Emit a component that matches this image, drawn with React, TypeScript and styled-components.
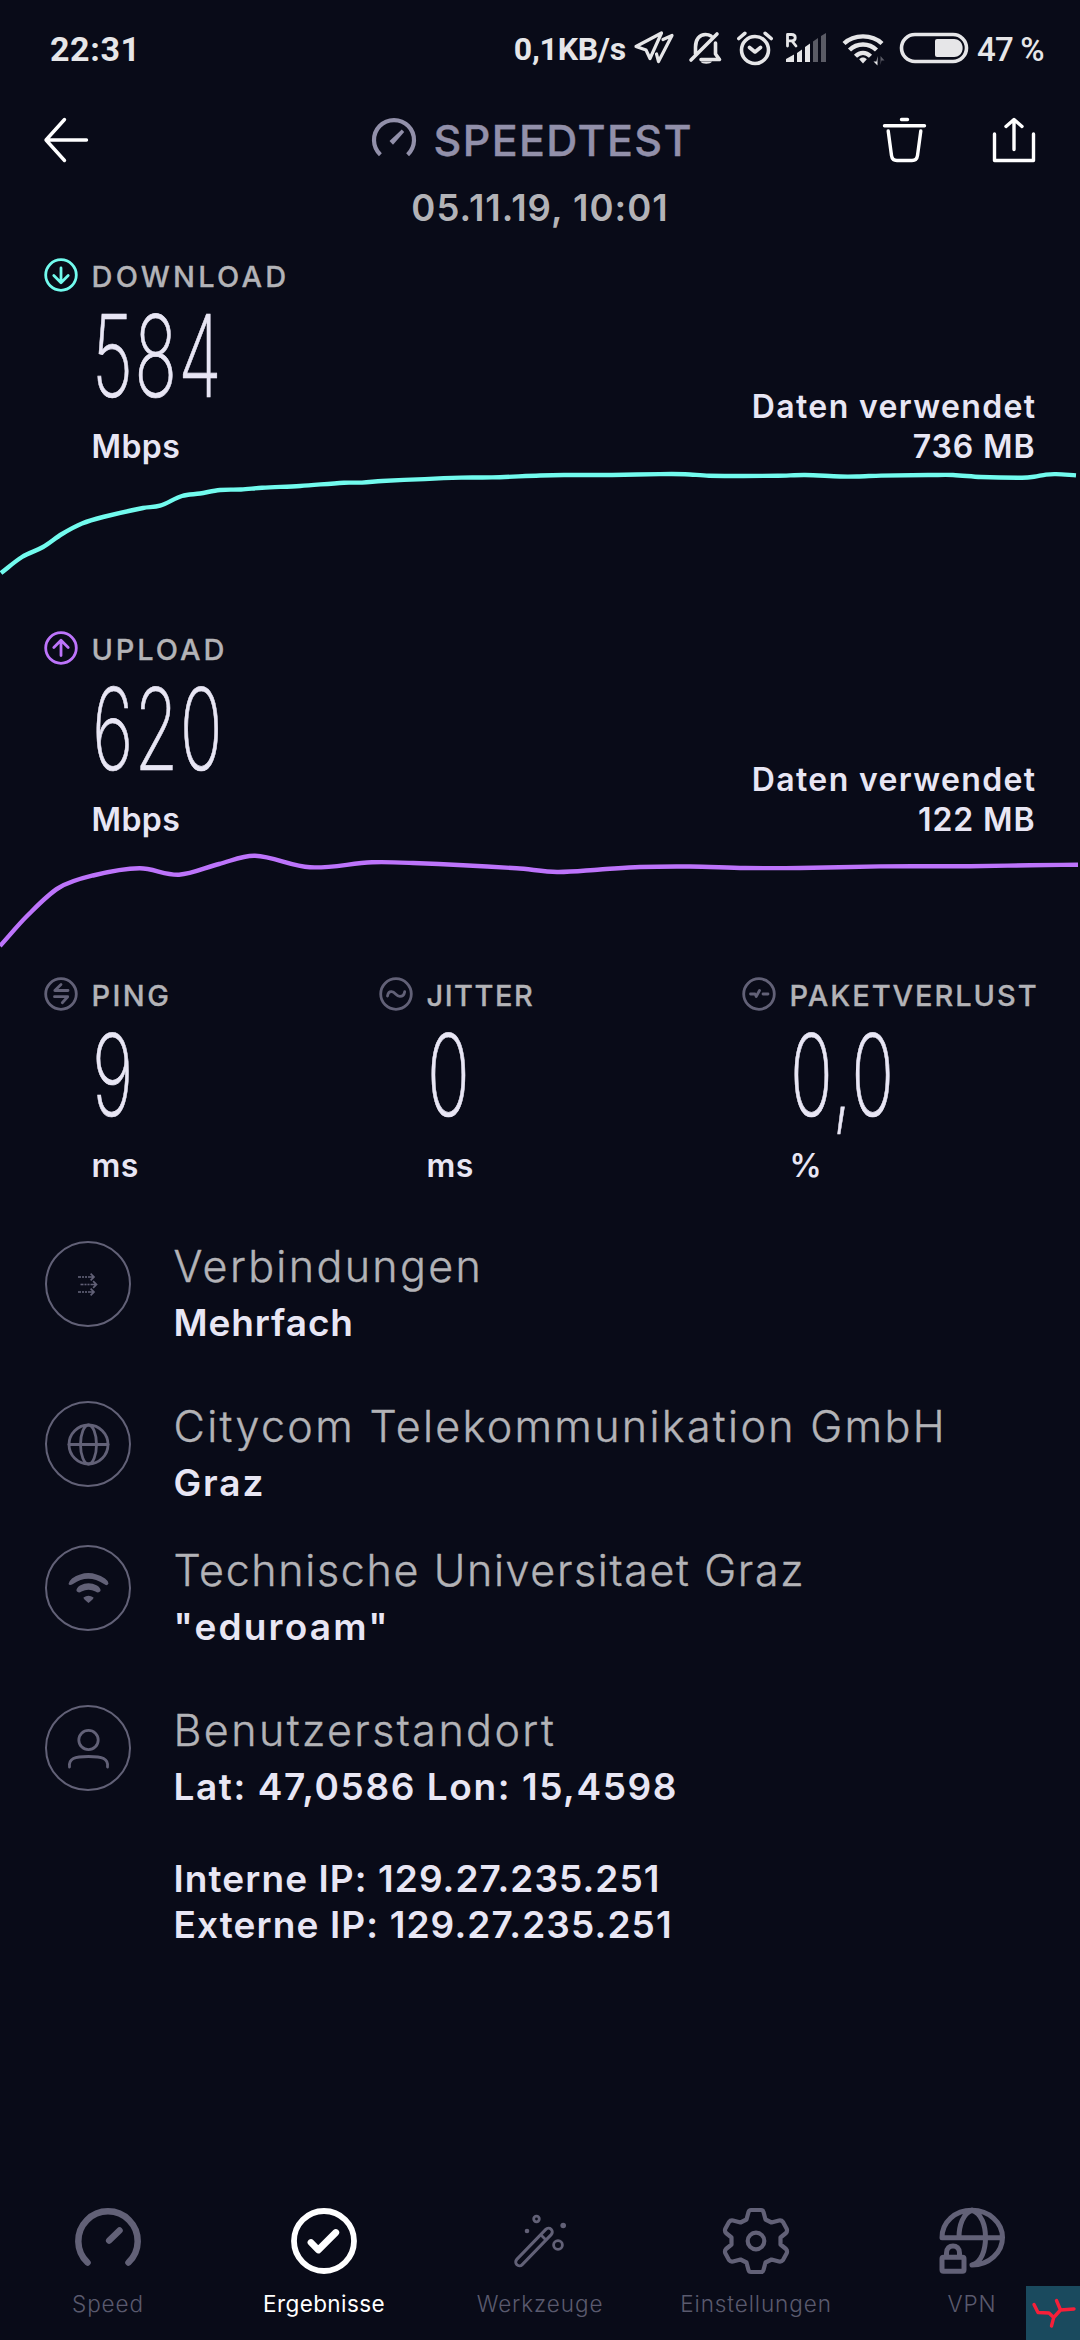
import React from 'react';
import styled, { createGlobalStyle } from 'styled-components';

const color = {
  bg: '#090b18',
  white: '#ffffff',
  text: '#e8e6f4',
  muted: '#b3b3b7',
  brand: '#9290aa',
  icon: '#626177',
  nav: '#5a5a6e',
  status: '#e6e6e8',
  statusDim: '#5a5b65',
  download: '#72fbee',
  upload: '#bd74fb',
};

const GlobalStyle = createGlobalStyle`
  body { margin: 0; background: ${color.bg}; }
  svg { display: block; flex: none; fill: none; overflow: visible; }
`;

const Screen = styled.div`
  position: relative;
  width: 1080px;
  height: 2340px;
  display: flex;
  flex-direction: column;
  background: ${color.bg};
  color: ${color.text};
  font-family: Inter, 'Noto Sans', sans-serif;
  white-space: nowrap;
  overflow: hidden;
`;

const StatusBar = styled.div`
  height: 98px;
  padding: 0 37px 0 50px;
  display: flex;
  align-items: center;
  justify-content: space-between;
  font-family: Roboto, sans-serif;
  color: ${color.status};
`;

const Clock = styled.span`
  font-size: 34px;
  font-weight: 700;
  letter-spacing: 0.6px;
`;

const StatusCluster = styled.div`
  display: flex;
  align-items: center;
`;

const NetSpeed = styled.span`
  font-size: 32px;
  font-weight: 700;
  letter-spacing: -0.2px;
`;

const StatusIcon = styled.svg<{ $gap: number; $stroke?: number }>`
  height: 42px;
  margin-left: ${(p) => p.$gap}px;
  stroke: ${color.status};
  stroke-width: ${(p) => p.$stroke ?? 3.6};
  stroke-linecap: round;
  stroke-linejoin: round;
`;

const BatteryText = styled.span`
  width: 66px;
  margin-left: 8px;
  font-size: 33px;
  font-weight: 500;
  letter-spacing: -0.8px;
`;

const Header = styled.header`
  height: 84px;
  padding: 0 44.5px 0 44px;
  display: grid;
  grid-template-columns: 328px 1fr auto;
  align-items: center;
`;

const Brand = styled.div`
  display: flex;
  align-items: center;
  gap: 17.5px;
  font-size: 43px;
  font-weight: 500;
  -webkit-text-stroke: 0.4px ${color.brand};
  letter-spacing: 1.4px;
  line-height: 52px;
  color: ${color.brand};
`;

const Actions = styled.div`
  display: flex;
  gap: 65px;
`;

const LineIcon = styled.svg`
  width: 44px;
  height: 44px;
  stroke: ${color.white};
  stroke-width: 3.4;
  stroke-linecap: round;
  stroke-linejoin: round;
`;

const DateLine = styled.div`
  height: 51px;
  line-height: 52px;
  text-align: center;
  font-size: 36.5px;
  font-weight: 600;
  letter-spacing: 1px;
  color: ${color.muted};
`;

const Transfer = styled.section`
  padding: 23px 44.5px 0 43.5px;
  display: flex;
  justify-content: space-between;
  align-items: flex-end;
`;

const UploadTransfer = styled(Transfer)`
  padding-top: 0;
`;

const MetricBox = styled.div`
  display: flex;
  flex-direction: column;
`;

const MetricHead = styled.div`
  height: 40px;
  display: flex;
  align-items: center;
  gap: 14px;
`;

const RoundIcon = styled.svg<{ $color: string }>`
  width: 34px;
  height: 34px;
  margin-bottom: 3px;
  stroke: ${(p) => p.$color};
  stroke-width: 2.8;
  stroke-linecap: round;
  stroke-linejoin: round;
`;

const MetricLabel = styled.span<{ $track: number }>`
  font-size: 29px;
  font-weight: 500;
  -webkit-text-stroke: 0.3px ${color.muted};
  line-height: 41px;
  letter-spacing: ${(p) => p.$track}px;
  color: ${color.muted};
`;

const MetricValue = styled.div`
  align-self: flex-start;
  height: 120px;
  margin-left: 48px;
  line-height: 120px;
  font-size: 113.5px;
  font-weight: 200;
  letter-spacing: 2px;
  -webkit-text-stroke: 0.7px ${color.text};
  transform: scaleX(0.625);
  transform-origin: left center;
`;

const MetricUnit = styled.div`
  margin: 10px 0 0 48px;
  font-size: 32px;
  font-weight: 600;
  line-height: 41px;
  height: 40px;
  letter-spacing: 0.4px;
`;

const Usage = styled.div`
  text-align: right;
  font-size: 32px;
  font-weight: 600;
`;

const UsageLabel = styled.div`
  height: 40px;
  line-height: 42px;
  letter-spacing: 1.37px;
  margin-right: -1px;
`;

const UsageAmount = styled.div`
  height: 40px;
  line-height: 42px;
  letter-spacing: 0.9px;
`;

const Chart = styled.svg<{ $color: string; $height: number }>`
  width: 1080px;
  height: ${(p) => p.$height}px;
  stroke: ${(p) => p.$color};
  stroke-width: 4.4;
  stroke-linejoin: round;
`;

const Metrics = styled.section`
  padding-left: 43.5px;
  display: grid;
  grid-template-columns: 335px 363px auto;
`;

const Details = styled.section`
  padding: 56px 44px 0 45px;
  display: flex;
  flex-direction: column;
`;

const DetailRow = styled.div<{ $height: number }>`
  min-height: ${(p) => p.$height}px;
  display: flex;
  align-items: flex-start;
  gap: 42.5px;
`;

const DetailIcon = styled.svg`
  width: 86px;
  height: 86px;
  stroke: ${color.icon};
  stroke-width: 2.8;
  stroke-linecap: round;
  stroke-linejoin: round;
`;

const DetailRing = styled.circle`
  stroke-width: 2;
`;

const DetailTitle = styled.div<{ $track: number }>`
  height: 51px;
  line-height: 51px;
  margin-bottom: 7px;
  font-size: 43px;
  font-weight: 300;
  -webkit-text-stroke: 0.4px ${color.muted};
  letter-spacing: ${(p) => p.$track}px;
  color: ${color.muted};
`;

const DetailText = styled.div<{ $track: number; $gap?: number }>`
  margin-top: ${(p) => p.$gap ?? 0}px;
  font-size: 37px;
  font-weight: 600;
  line-height: 47px;
  height: 46px;
  letter-spacing: ${(p) => p.$track}px;
`;

const NavBar = styled.nav`
  height: 133px;
  margin-top: auto;
  display: grid;
  grid-template-columns: repeat(5, 1fr);
`;

const NavItem = styled.div<{ $active?: boolean }>`
  display: flex;
  flex-direction: column;
  align-items: center;
  gap: 14px;
  font-size: 22.5px;
  font-weight: ${(p) => (p.$active ? 400 : 300)};
  line-height: 30px;
  letter-spacing: ${(p) => (p.$active ? 0.4 : 0.9)}px;
  color: ${(p) => (p.$active ? color.white : color.nav)};

  svg {
    width: 68px;
    height: 68px;
    stroke: ${(p) => (p.$active ? color.white : color.icon)};
    stroke-width: 5;
    stroke-linecap: round;
    stroke-linejoin: round;
  }
`;

const CornerBadge = styled.div`
  position: absolute;
  right: 0;
  bottom: 0;
  width: 54px;
  height: 54px;
  background: #1a4a5e;

  svg {
    width: 54px;
    height: 54px;
    stroke: #f71f39;
    stroke-width: 3.4;
    stroke-linejoin: round;
    stroke-linecap: round;
  }
`;

type Pt = [number, number];

function smooth(points: Pt[]): string {
  let d = `M${points[0][0]} ${points[0][1]}`;
  for (let i = 0; i < points.length - 1; i++) {
    const p0 = points[Math.max(0, i - 1)];
    const p1 = points[i];
    const p2 = points[i + 1];
    const p3 = points[Math.min(points.length - 1, i + 2)];
    const k = (p2[0] - p1[0]) / 3;
    const m1 = (p2[1] - p0[1]) / (p2[0] - p0[0] || 1);
    const m2 = (p3[1] - p1[1]) / (p3[0] - p1[0] || 1);
    d += ` C${p1[0] + k} ${p1[1] + m1 * k} ${p2[0] - k} ${p2[1] - m2 * k} ${p2[0]} ${p2[1]}`;
  }
  return d;
}

const downloadSeries: Pt[] = [
  [1, 573], [22, 557], [43, 547], [62, 534], [82, 523.5], [103, 517], [143, 508], [160, 505.7],
  [182, 496], [200, 493.5], [220, 490], [241, 489.5], [262, 487.7], [300, 486], [344, 482.7],
  [362, 482.6], [382, 481], [461, 477.6], [492, 477.4], [540, 475.5], [564, 475], [612, 475],
  [660, 474.1], [685, 474.2], [709, 475.7], [778, 475.8], [805, 475], [840, 476.5], [857, 476.5],
  [881, 475.6], [933, 475], [953, 475], [981, 477], [1022, 477.7], [1034, 476.8], [1046, 474.6],
  [1056, 474.1], [1076, 475.4],
];

const uploadSeries: Pt[] = [
  [0, 946], [27.5, 915.5], [58.5, 888], [93, 875.5], [139.5, 868.3], [179, 874.7], [219, 864],
  [255, 855.8], [310, 867.3], [372, 862.3], [413, 863], [516.5, 868.3], [557, 872], [600, 869.5],
  [640, 867], [690, 866.5], [745, 868], [800, 868], [880, 866.4], [970, 866.2], [1030, 865.3],
  [1078, 864.7],
];

const DownIcon = () => (
  <RoundIcon $color={color.download} viewBox="0 0 34 34">
    <circle cx="17" cy="17" r="15.3" />
    <path d="M17 10v14M9.8 17.5l7.2 7.2 7.2-7.2" />
  </RoundIcon>
);

const UpIcon = () => (
  <RoundIcon $color={color.upload} viewBox="0 0 34 34">
    <circle cx="17" cy="17" r="15.3" />
    <path d="M17 24.5V10M9.8 16.5L17 9.3l7.2 7.2" />
  </RoundIcon>
);

const PingIcon = () => (
  <RoundIcon $color={color.icon} viewBox="0 0 34 34">
    <circle cx="17" cy="17" r="15.3" />
    <path d="M24 13.5H10.8l6.2-6M10.5 19.7h13.2l-5.4 6" />
  </RoundIcon>
);

const JitterIcon = () => (
  <RoundIcon $color={color.icon} viewBox="0 0 34 34">
    <circle cx="17" cy="17" r="15.3" />
    <path d="M8.5 19c.6-3.2 2.2-4.6 4.3-4.3 3.4.4 4.4 4.7 8 4.7 2.7 0 4.4-1.7 4.9-4.7" />
  </RoundIcon>
);

const LossIcon = () => (
  <RoundIcon $color={color.icon} viewBox="0 0 34 34">
    <circle cx="17" cy="17" r="15.3" />
    <path d="M8.5 17H13l1.2 2.5 3.3-6M21 17h5" />
  </RoundIcon>
);

interface MetricProps {
  icon: React.ReactNode;
  label: string;
  track: number;
  value: string;
  unit: string;
}

const Metric = ({ icon, label, track, value, unit }: MetricProps) => (
  <MetricBox>
    <MetricHead>
      {icon}
      <MetricLabel $track={track}>{label}</MetricLabel>
    </MetricHead>
    <MetricValue>{value}</MetricValue>
    <MetricUnit>{unit}</MetricUnit>
  </MetricBox>
);

const ARROW_ROWS: Pt[] = [[-10, -7], [-7.5, 0.5], [-10, 8]];

export default function App() {
  return (
    <>
      <GlobalStyle />
      <Screen>
        <StatusBar>
          <Clock>22:31</Clock>
          <StatusCluster>
            <NetSpeed>0,1KB/s</NetSpeed>
            <StatusIcon $gap={8} $stroke={3.2} width="40" viewBox="634 28 40 42">
              <path d="M636 46.5L661.5 33 650 58.5 646 50zM663 39.5L672 35.5 658.5 61.5 656.5 54" />
            </StatusIcon>
            <StatusIcon $gap={14} width="34" viewBox="688 28 34 42">
              <path d="M695.5 54v-7c0-7.5 4-12.5 10-12.5 2 0 4 .5 5.5 1.5M715.5 43v11l4 5.5H701M691 60l26-26" />
              <path d="M700.5 61.5h11.5c-1.5 3-10 3-11.5 0z" fill={color.status} stroke="none" />
            </StatusIcon>
            <StatusIcon $gap={14} width="38" viewBox="736 28 38 42">
              <circle cx="755" cy="50" r="13.5" />
              <path d="M749.5 47.5l5.5 4.5 5.5-4.5M738.8 38.5l6-5.2M771.2 38.5l-6-5.2" />
            </StatusIcon>
            <StatusIcon $gap={11} $stroke={2.8} width="42" viewBox="785 28 42 42">
              <path d="M787.5 46V34.5h4c5 0 5 6.3 0 6.3h-4M792 41l4 5" />
              <g stroke="none" fill={color.status}>
                <path d="M786 62v-3l8-4.5V62zM797 62v-9l5-3.5V62zM805 62V47l5-3.5V62z" />
                <path d="M813 62V41.5l5-3.5v24zM821 62V36l5-3v29z" fill={color.statusDim} />
              </g>
            </StatusIcon>
            <StatusIcon $gap={14} $stroke={4.4} width="44" viewBox="841 28 44 42">
              <path
                d="M844 43.5c10-9.5 28-9.5 38 0M849.5 50c7.5-7.3 19.5-7.3 27 0M855.5 56.3c4.5-4.5 10.5-4.5 15 0"
                strokeLinecap="butt"
              />
              <path d="M863 63.5l-3.8-4.2c2-2.3 5.6-2.3 7.6 0z" fill={color.status} stroke="none" />
              <path d="M877.5 56v9.5l-4-4h3z" fill={color.status} stroke="none" />
              <path d="M880.5 65v-9l4 4.5h-3z" fill={color.statusDim} stroke="none" />
            </StatusIcon>
            <StatusIcon $gap={14} width="70" viewBox="899 28 70 42">
              <rect x="901.5" y="34.5" width="65" height="27" rx="13.5" />
              <path
                d="M937 39h17c11.5 0 11.5 18 0 18h-17q-2 0-2-2V41q0-2 2-2z"
                fill={color.status}
                stroke="none"
              />
            </StatusIcon>
            <BatteryText>47 %</BatteryText>
          </StatusCluster>
        </StatusBar>

        <Header>
          <LineIcon viewBox="0 0 44 44">
            <path d="M42.5 22H2M20.5 1.5L2 22l18.5 20.5" />
          </LineIcon>
          <Brand>
            <svg width="44" height="44" viewBox="-22 -22 44 44" stroke={color.brand} strokeWidth="4.2">
              <path d="M-13.6 14.7A20 20 0 1 1 13.6 14.7" />
              <path d="M-4.5 1L-1 4.8 10.2-8 7.8-10.4z" fill={color.brand} stroke="none" />
            </svg>
            SPEEDTEST
          </Brand>
          <Actions>
            <LineIcon viewBox="0 0 44 44">
              <path d="M18.5 1.5h6M1.5 7.7h40M5.2 13l3.3 24.5q.7 5 5.5 5h15q4.8 0 5.5-5L37.8 13" />
            </LineIcon>
            <LineIcon viewBox="0 0 44 44">
              <path d="M2.5 16v26.5h39V16M22 31.5V2M14 8.5l8-7 8 7" />
            </LineIcon>
          </Actions>
        </Header>
        <DateLine>05.11.19, 10:01</DateLine>

        <Transfer>
          <Metric icon={<DownIcon />} label="DOWNLOAD" track={3.2} value="584" unit="Mbps" />
          <Usage>
            <UsageLabel>Daten verwendet</UsageLabel>
            <UsageAmount>736 MB</UsageAmount>
          </Usage>
        </Transfer>
        <Chart $color={color.download} $height={163} viewBox="0 466 1080 163">
          <path d={smooth(downloadSeries)} />
        </Chart>

        <UploadTransfer>
          <Metric icon={<UpIcon />} label="UPLOAD" track={2.9} value="620" unit="Mbps" />
          <Usage>
            <UsageLabel>Daten verwendet</UsageLabel>
            <UsageAmount>122 MB</UsageAmount>
          </Usage>
        </UploadTransfer>
        <Chart $color={color.upload} $height={136} viewBox="0 839 1080 136">
          <path d={smooth(uploadSeries)} />
        </Chart>

        <Metrics>
          <Metric icon={<PingIcon />} label="PING" track={2.4} value="9" unit="ms" />
          <Metric icon={<JitterIcon />} label="JITTER" track={1.5} value="0" unit="ms" />
          <Metric icon={<LossIcon />} label="PAKETVERLUST" track={1.95} value="0,0" unit="%" />
        </Metrics>

        <Details>
          <DetailRow $height={160}>
            <DetailIcon viewBox="-43 -43 86 86">
              <DetailRing r="42" />
              {ARROW_ROWS.map(([x, y]) => (
                <g key={y} fill={color.icon} stroke="none">
                  <rect x={x} y={y - 0.8} width="3" height="1.6" />
                  <rect x={x + 4} y={y - 0.8} width="2" height="1.6" />
                  <rect x={x + 7} y={y - 0.8} width="2" height="1.6" />
                  <path d={`M${x + 10} ${y - 0.8}h4l-2-2 1.2-1.2 4 4-4 4-1.2-1.2 2-2h-4z`} />
                </g>
              ))}
            </DetailIcon>
            <div>
              <DetailTitle $track={2.35}>Verbindungen</DetailTitle>
              <DetailText $track={0.9}>Mehrfach</DetailText>
            </div>
          </DetailRow>
          <DetailRow $height={144}>
            <DetailIcon viewBox="-43 -43 86 86">
              <DetailRing r="42" />
              <circle cx="0.5" cy="0.5" r="19.5" />
              <ellipse cx="0.5" cy="0.5" rx="8" ry="19.5" />
              <path d="M-19 .5h39" />
            </DetailIcon>
            <div>
              <DetailTitle $track={2.33}>Citycom Telekommunikation GmbH</DetailTitle>
              <DetailText $track={1.9}>Graz</DetailText>
            </div>
          </DetailRow>
          <DetailRow $height={160}>
            <DetailIcon viewBox="-43 -43 86 86">
              <DetailRing r="42" />
              <g fill={color.icon} stroke="none">
                <path d="M-19.5-4Q-19-7-16-9.5Q0-20.5 17-9.5Q20.5-7 20.5-4.5Q19-1.5 16-4Q0-14.5-15-4Q-18.5-2-19.5-4z" />
                <path d="M-11.5 3Q-12 0-8-2.5Q.5-7 9-2.5Q13 0 12.5 3Q10.5 5.5 7.5 3.5Q.5 0-6.5 3.5Q-9.5 5.5-11.5 3z" />
                <path d="M-4.5 9.5Q.5 6 5.5 9.5Q6 10.5 .5 15Q-5 10.5-4.5 9.5z" />
              </g>
            </DetailIcon>
            <div>
              <DetailTitle $track={1.64}>Technische Universitaet Graz</DetailTitle>
              <DetailText $track={2.2}>"eduroam"</DetailText>
            </div>
          </DetailRow>
          <DetailRow $height={160}>
            <DetailIcon viewBox="-43 -43 86 86">
              <DetailRing r="42" />
              <circle cx="0.5" cy="-8" r="9.7" />
              <path d="M-18.5 19c-1-8.5 5-10.5 19-10.5s20 2 19 10.5" />
            </DetailIcon>
            <div>
              <DetailTitle $track={2.42}>Benutzerstandort</DetailTitle>
              <DetailText $track={1.58}>Lat: 47,0586 Lon: 15,4598</DetailText>
              <DetailText $track={1.08} $gap={46}>Interne IP: 129.27.235.251</DetailText>
              <DetailText $track={1.12}>Externe IP: 129.27.235.251</DetailText>
            </div>
          </DetailRow>
        </Details>

        <NavBar>
          <NavItem>
            <svg viewBox="-34 -34 68 68">
              <g strokeWidth="6.5">
                <path d="M-20.5 21.5A29.7 29.7 0 1 1 20.5 21.5M1.2-.5L11.5-10.5" />
              </g>
            </svg>
            Speed
          </NavItem>
          <NavItem $active>
            <svg viewBox="-34 -34 68 68">
              <g strokeWidth="5.8">
                <circle r="30" />
              </g>
              <g strokeWidth="6.8">
                <path d="M-13 1.5l7.3 7.5L11.8-8.5" />
              </g>
            </svg>
            Ergebnisse
          </NavItem>
          <NavItem>
            <svg viewBox="-34 -34 68 68">
              <g strokeWidth="10.5">
                <path d="M-20.5 21L8.5-9" />
              </g>
              <g strokeWidth="4.6" stroke={color.bg}>
                <path d="M-20.5 21L8.5-9" />
              </g>
              <g strokeWidth="2.8">
                <path d="M1.5-5.5l4 4" />
                <circle cx="-3.5" cy="-22" r="2.8" />
                <circle cx="18" cy="4" r="4.4" />
              </g>
              <g fill={color.icon} stroke="none">
                <circle cx="-13" cy="-10" r="2.3" />
                <circle cx="23.2" cy="-15.5" r="2.8" />
              </g>
            </svg>
            Werkzeuge
          </NavItem>
          <NavItem>
            <svg viewBox="-34 -34 68 68">
              <g strokeWidth="4.2">
                <path d="M-5-31H5Q7-31 7.5-29L9.5-21.5 15.5-18.5 23-20.5Q25.5-21 27-19L30.8-12Q31.5-9.5 30-8L24.5-3.5V3.5L30 8Q31.5 9.5 30.8 12L27 19Q25.5 21 23 20.5L15.5 18.5 9.5 21.5 7.5 29Q7 31 5 31H-5Q-7 31-7.5 29L-9.5 21.5-15.5 18.5-23 20.5Q-25.5 21-27 19L-30.8 12Q-31.5 9.5-30 8L-24.5 3.5V-3.5L-30-8Q-31.5-9.5-30.8-12L-27-19Q-25.5-21-23-20.5L-15.5-18.5-9.5-21.5-7.5-29Q-7-31-5-31z" />
                <circle r="8.3" />
              </g>
            </svg>
            Einstellungen
          </NavItem>
          <NavItem>
            <svg viewBox="-34 -34 68 68">
              <path d="M-30-3.3C-30-19-17-30.7 0-30.7S30.5-18.5 30.5-3.5 17 24 0 24M-30-3.3H30M0-30.7C-9-28-13-15-13-4M0-30.7C9.5-28 13.5-15 13.5-3.5 13.5 9 9.5 21.5 0 24" />
              <rect x="-30" y="16.3" width="22" height="14" rx="1.5" />
              <path d="M-25.5 15.5V12c0-9.5 13-9.5 13 0v3.5" />
            </svg>
            VPN
          </NavItem>
        </NavBar>

        <CornerBadge>
          <svg viewBox="0 0 54 54">
            <path d="M8 18.5l4 8 11 .5 4.7 4.5L25.5 40M27.7 31.5L34.5 24l-4-9.5M34.5 24L48 23" />
          </svg>
        </CornerBadge>
      </Screen>
    </>
  );
}
